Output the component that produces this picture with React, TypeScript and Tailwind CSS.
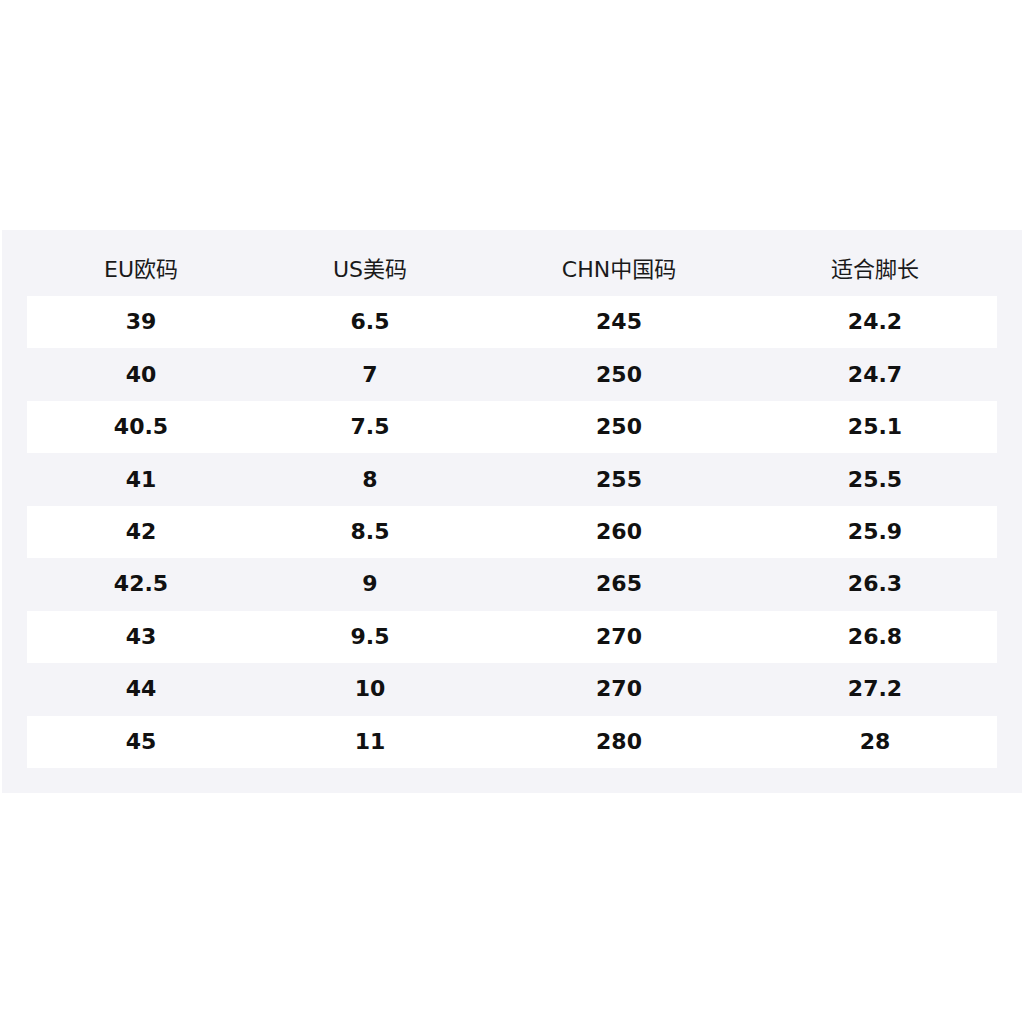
import React from "react";

const rows = [
  ["39", "6.5", "245", "24.2"],
  ["40", "7", "250", "24.7"],
  ["40.5", "7.5", "250", "25.1"],
  ["41", "8", "255", "25.5"],
  ["42", "8.5", "260", "25.9"],
  ["42.5", "9", "265", "26.3"],
  ["43", "9.5", "270", "26.8"],
  ["44", "10", "270", "27.2"],
  ["45", "11", "280", "28"],
];

const headers = ["EU欧码", "US美码", "CHN中国码", "适合脚长"];

export default function App() {
  return (
    <div
      className="w-[1024px] h-[1024px] bg-white pt-[230px] px-[2px]"
      style={{ fontFamily: '"DejaVu Sans", "Noto Sans CJK SC", sans-serif' }}
    >
      <div className="w-[1020px] bg-[#f4f4f8] px-[25px] pb-[25px]">
        <div className="grid grid-cols-[228px_230px_268px_244px] h-[66px] items-center pt-[14px] text-[22px] text-[#1a1a1a]">
          {headers.map((h) => (
            <div key={h} className="text-center leading-none">
              {h}
            </div>
          ))}
        </div>
        {rows.map((r, i) => (
          <div
            key={i}
            className={`grid grid-cols-[228px_230px_268px_244px] h-[52.45px] items-center text-[22px] font-bold text-[#111] ${
              i % 2 === 0 ? "bg-white" : ""
            }`}
          >
            {r.map((c, j) => (
              <div key={j} className="text-center leading-none">
                {c}
              </div>
            ))}
          </div>
        ))}
      </div>
    </div>
  );
}
